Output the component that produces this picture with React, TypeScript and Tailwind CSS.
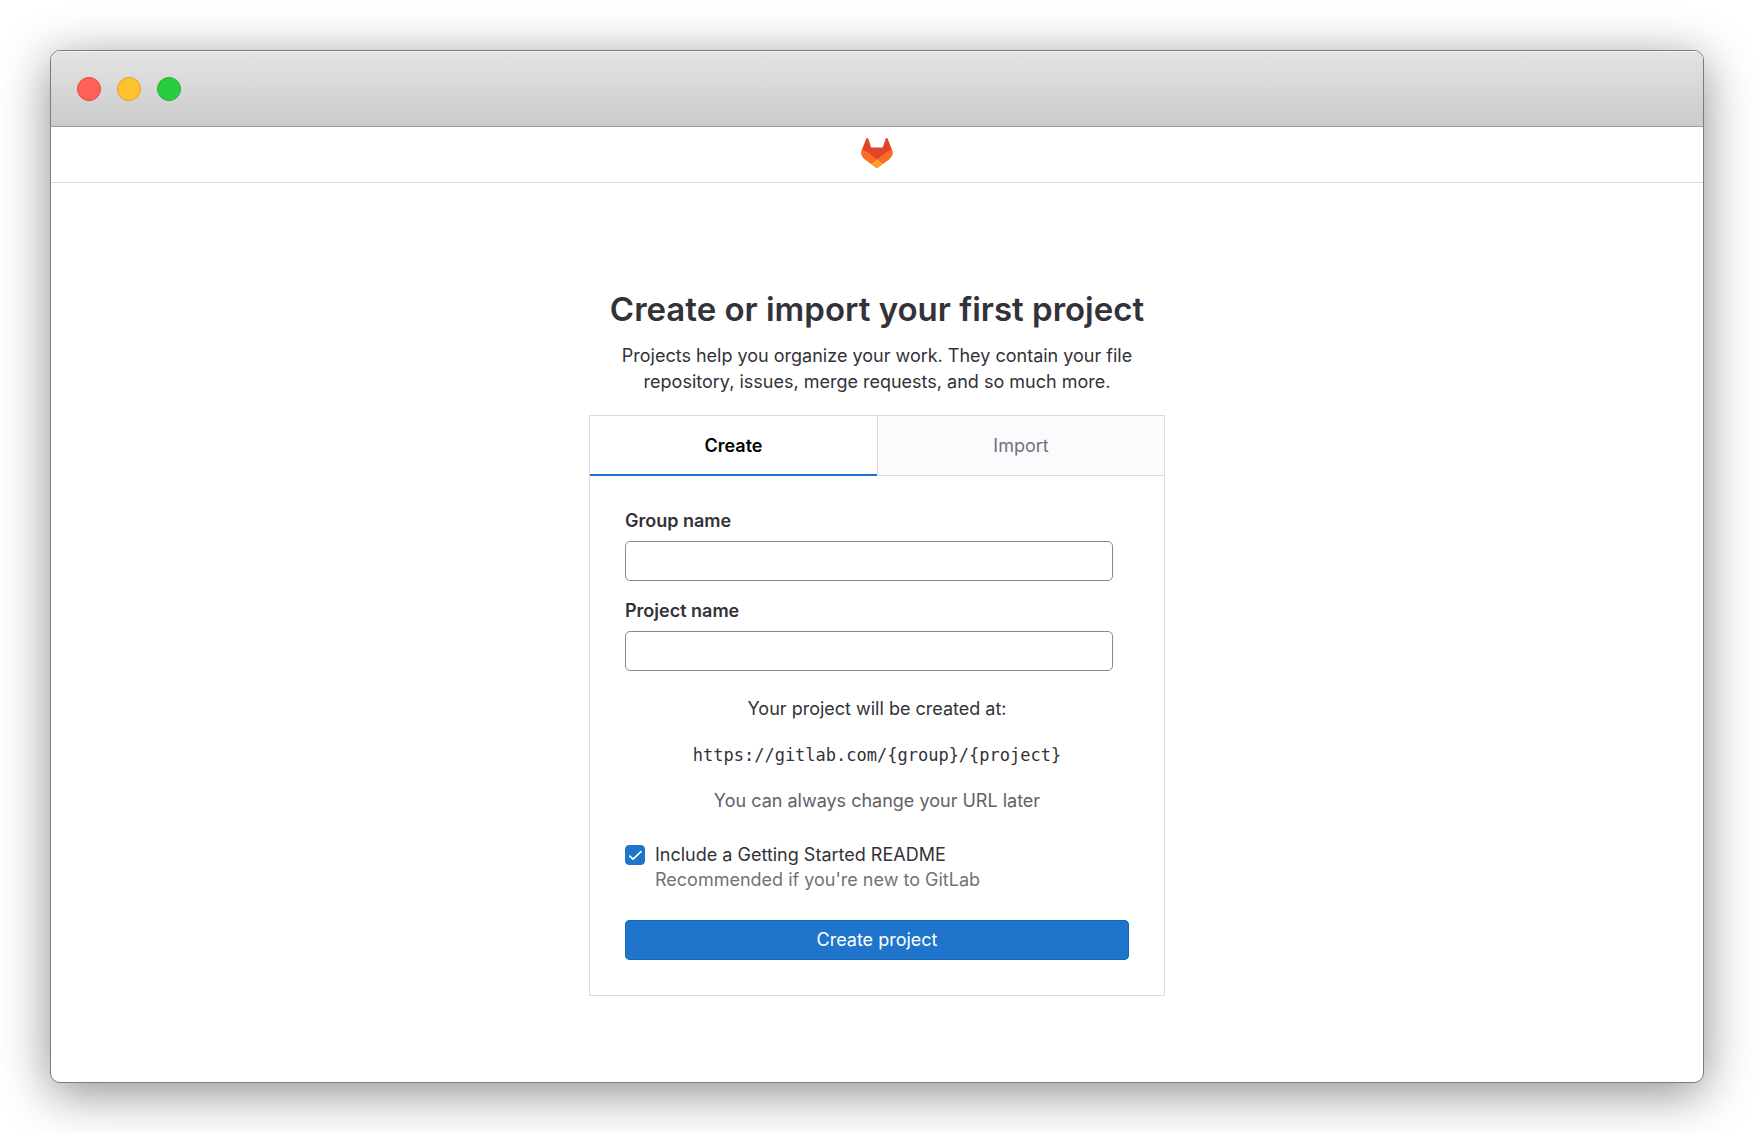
import { useState } from "react";

function TanukiLogo() {
  return (
    <svg viewBox="0 0 25 24" className="h-[30px] w-8" aria-label="GitLab" role="img">
      <path
        d="m24.507 9.5-.034-.09L21.082.562a.896.896 0 0 0-1.694.091l-2.29 7.01H7.825L5.535.653a.898.898 0 0 0-1.694-.09L.451 9.411.416 9.5a6.297 6.297 0 0 0 2.09 7.278l.012.01.03.022 5.16 3.867 2.56 1.935 1.554 1.176a1.051 1.051 0 0 0 1.268 0l1.555-1.176 2.56-1.935 5.197-3.89.014-.01A6.297 6.297 0 0 0 24.507 9.5Z"
        fill="#E24329"
      />
      <path
        d="m24.507 9.5-.034-.09a11.44 11.44 0 0 0-4.56 2.051l-7.447 5.632 4.742 3.584 5.197-3.89.014-.01A6.297 6.297 0 0 0 24.507 9.5Z"
        fill="#FC6D26"
      />
      <path
        d="m7.707 20.677 2.56 1.935 1.555 1.176a1.051 1.051 0 0 0 1.268 0l1.555-1.176 2.56-1.935-4.743-3.584-4.755 3.584Z"
        fill="#FCA326"
      />
      <path
        d="M5.01 11.461a11.43 11.43 0 0 0-4.56-2.05L.416 9.5a6.297 6.297 0 0 0 2.09 7.278l.012.01.03.022 5.16 3.867 4.745-3.584-7.444-5.632Z"
        fill="#FC6D26"
      />
    </svg>
  );
}

function TitleBar() {
  return (
    <div className="flex h-[76px] items-center gap-4 border-b border-[#9c9c9c] bg-linear-to-b from-[#e4e4e4] to-[#cbcbcb] px-[26px] shadow-[inset_0_1px_0_#f4f4f4]">
      <span className="size-6 rounded-full border border-[#e2463f] bg-[#ff6058]" />
      <span className="size-6 rounded-full border border-[#e6a029] bg-[#ffc130]" />
      <span className="size-6 rounded-full border border-[#1fae33] bg-[#27ce41]" />
    </div>
  );
}

function TextField({ id, label }: { id: string; label: string }) {
  const [value, setValue] = useState("");
  return (
    <div className="mr-4">
      <label htmlFor={id} className="mb-2 block leading-6 font-semibold">
        {label}
      </label>
      <input
        id={id}
        type="text"
        value={value}
        onChange={(e) => setValue(e.target.value)}
        className="block h-10 w-full rounded-[5px] border border-[#89888d] bg-white px-4"
      />
    </div>
  );
}

export default function App() {
  const [readme, setReadme] = useState(true);
  return (
    <div className="flex min-h-screen flex-col bg-white p-[50px] font-['Inter',sans-serif] text-[18px] leading-[26px] text-[#333238]">
      <div className="flex grow flex-col overflow-hidden rounded-[10px] border border-[#7c7c7c] bg-white shadow-[0_10px_50px_rgba(0,0,0,0.45)]">
        <TitleBar />
        <header className="flex h-14 items-center justify-center border-b border-[#dcdcde] pb-1">
          <TanukiLogo />
        </header>
        <main className="mx-auto w-full max-w-[576px] pt-[104px] pb-16">
          <h1 className="text-center text-[33px] leading-[44px] font-semibold">
            Create or import your first project
          </h1>
          <p className="mx-auto mt-3 mb-5 max-w-[520px] text-center">
            Projects help you organize your work. They contain your file repository, issues, merge requests, and so
            much more.
          </p>
          <section className="border border-[#dcdcde]">
            <div role="tablist" className="grid h-[60px] grid-cols-2">
              <button
                type="button"
                role="tab"
                aria-selected="true"
                className="font-semibold text-black shadow-[inset_0_-2px_0_#1f75cb]"
              >
                Create
              </button>
              <button
                type="button"
                role="tab"
                aria-selected="false"
                className="border-b border-l border-[#dcdcde] bg-[#fbfafd] text-[#737278]"
              >
                Import
              </button>
            </div>
            <form className="px-[35px] pt-[33px] pb-[35px]" onSubmit={(e) => e.preventDefault()}>
              <div className="flex flex-col gap-[18px]">
                <TextField id="group-name" label="Group name" />
                <TextField id="project-name" label="Project name" />
              </div>
              <div className="mt-[25px] flex flex-col gap-5 text-center">
                <p>Your project will be created at:</p>
                <p className="font-['DejaVu_Sans_Mono',monospace] text-[17px]">{"https://gitlab.com/{group}/{project}"}</p>
                <p className="text-[#626168]">You can always change your URL later</p>
              </div>
              <div className="mt-7 grid grid-cols-[20px_1fr] gap-x-[10px]">
                <span className="relative mt-[3px] size-5">
                  <input
                    id="readme"
                    type="checkbox"
                    checked={readme}
                    onChange={(e) => setReadme(e.target.checked)}
                    aria-describedby="readme-help"
                    className="peer block size-5 appearance-none rounded-[4px] border border-[#89888d] checked:border-[#1f75cb] checked:bg-[#1f75cb]"
                  />
                  <svg
                    viewBox="0 0 20 20"
                    fill="none"
                    stroke="white"
                    strokeWidth="1.7"
                    strokeLinecap="round"
                    strokeLinejoin="round"
                    className="pointer-events-none absolute inset-0 hidden peer-checked:block"
                  >
                    <path d="M4.8 11.1 8 14.2 16 6.7" />
                  </svg>
                </span>
                <label htmlFor="readme" className="leading-[25px]">
                  Include a Getting Started README
                </label>
                <p id="readme-help" className="col-start-2 leading-[25px] text-[#737278]">
                  Recommended if you're new to GitLab
                </p>
              </div>
              <button
                type="submit"
                className="mt-7 block h-10 w-full rounded-[5px] bg-[#1f75cb] text-white shadow-[inset_0_0_0_1px_#1068bf]"
              >
                Create project
              </button>
            </form>
          </section>
        </main>
      </div>
    </div>
  );
}
